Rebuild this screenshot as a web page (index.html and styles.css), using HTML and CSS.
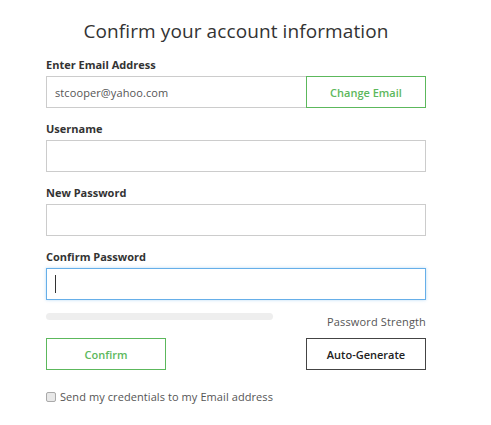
FILE: index.html
```
<!DOCTYPE html>
<html>
<head>
<meta charset="utf-8">
<link rel="stylesheet" href="styles.css">
</head>
<body>
<div class="form">
  <h1 class="title">Confirm your account information</h1>
  <div class="group">
    <label class="label">Enter Email Address</label>
    <div class="email-row">
      <input class="input email" type="text" value="stcooper@yahoo.com">
      <button class="btn btn-green btn-change">Change Email</button>
    </div>
  </div>
  <div class="group">
    <label class="label">Username</label>
    <input class="input" type="text">
  </div>
  <div class="group">
    <label class="label">New Password</label>
    <input class="input" type="password">
  </div>
  <div class="group last">
    <label class="label">Confirm Password</label>
    <div class="caret-wrap">
      <input class="input focused" type="password">
      <span class="caret"></span>
    </div>
  </div>
  <div class="strength-row">
    <div class="bar"></div>
    <span class="strength-text">Password Strength</span>
  </div>
  <div class="btn-row">
    <button class="btn btn-green btn-wide">Confirm</button>
    <button class="btn btn-dark btn-wide">Auto-Generate</button>
  </div>
  <label class="check-row">
    <span class="box"></span>
    <span class="check-text">Send my credentials to my Email address</span>
  </label>
</div>
</body>
</html>
```
FILE: styles.css
```
* { box-sizing: border-box; }
html, body { margin: 0; padding: 0; background: #fff; }
body { font-family: "Open Sans", "Liberation Sans", sans-serif; color: #333; }
.form {
  width: 380px;
  margin-left: 46px;
  padding-top: 19px;
}
.title {
  margin: 0 0 14px 0;
  font-size: 19px;
  line-height: 24px;
  font-weight: 400;
  text-align: center;
  color: #333;
  letter-spacing: 0.1px;
}
.group { display: flex; flex-direction: column; margin-bottom: 13px; }
.group.last { margin-bottom: 13px; }
.label {
  font-size: 11px;
  line-height: 15px;
  font-weight: 700;
  color: #333;
  margin-bottom: 4px;
}
.input {
  display: block;
  width: 100%;
  height: 32px;
  border: 1px solid #ccc;
  padding: 0 8px;
  font-family: inherit;
  font-size: 11px;
  color: #555;
  background: #fff;
  outline: none;
  margin: 0;
  letter-spacing: 0.1px;
}
.email-row { display: flex; }
.email-row .email { flex: 1; border-right: none; }
.btn {
  height: 32px;
  background: #fff;
  font-family: inherit;
  font-size: 11px;
  padding: 0;
  margin: 0;
  cursor: pointer;
}
.btn-green { border: 1px solid #5cb85c; color: #5cb85c; font-weight: 600; }
.btn-dark { border: 1px solid #444; color: #222; font-weight: 600; }
.btn-change { width: 120px; }
.btn-wide { width: 120px; }
.caret-wrap { position: relative; }
.focused {
  border-color: #66afe9;
  box-shadow: 0 0 3px rgba(102, 175, 233, 0.45);
}
.caret {
  position: absolute;
  left: 9px;
  top: 7px;
  width: 1px;
  height: 18px;
  background: #333;
}
.strength-row {
  display: flex;
  justify-content: space-between;
  align-items: flex-start;
}
.bar {
  width: 227px;
  height: 7px;
  border-radius: 4px;
  background: #eee;
}
.strength-text {
  font-size: 11px;
  line-height: 17px;
  color: #555;
  letter-spacing: 0.15px;
}
.btn-row {
  display: flex;
  justify-content: space-between;
  margin-top: 8px;
}
.check-row {
  display: flex;
  align-items: center;
  gap: 4px;
  margin-top: 19px;
  font-size: 11px;
  line-height: 15px;
  color: #555;
  letter-spacing: 0.08px;
}
.box {
  width: 10px;
  height: 10px;
  border: 1px solid #aaa;
  border-radius: 2px;
  background: #e8e8e8;
}
```
